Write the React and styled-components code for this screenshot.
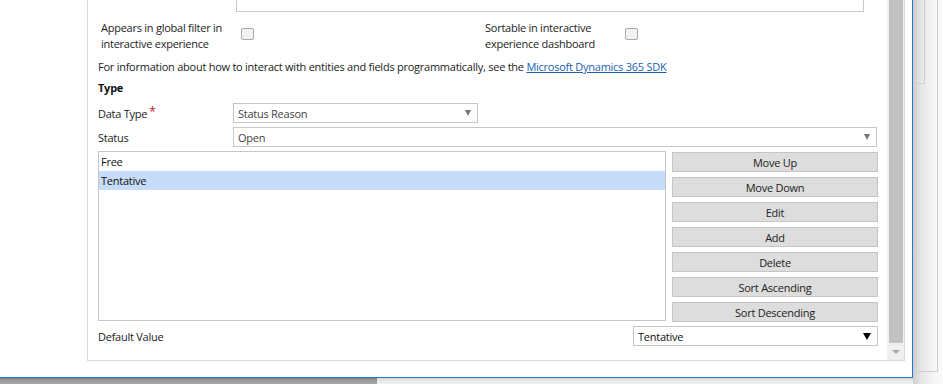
import React from "react";
import styled, { createGlobalStyle } from "styled-components";

const GlobalStyle = createGlobalStyle`
  html, body {
    margin: 0;
    padding: 0;
    background: #fff;
  }
  body {
    font-family: "Open Sans", "Noto Sans", Arial, sans-serif;
    font-size: 11px;
    letter-spacing: -0.25px;
    color: #222;
  }
  * {
    box-sizing: border-box;
  }
`;

const Desktop = styled.div`
  width: 943px;
  height: 384px;
  overflow: hidden;
  display: grid;
  grid-template-columns: 913px 30px;
  grid-template-rows: 378px 6px;
  background: #fff;
`;

const Dialog = styled.div`
  grid-column: 1;
  grid-row: 1;
  background: #fff;
  border-right: 1px solid #1b7ad2;
  border-bottom: 1px solid #1b7ad2;
  padding-left: 87px;
`;

const BackWindows = styled.div`
  grid-column: 2;
  grid-row: 1 / span 2;
  background: linear-gradient(to right, #cdcdcd 0px, #e6e6e6 8px, #f4f4f4 20px, #fbfbfb 30px);
`;

const BackFrame = styled.div`
  width: ${(p) => p.$w}px;
  height: ${(p) => p.$h}px;
  border-right: 1px solid #cfcfcf;
  border-bottom: 1px solid #cfcfcf;
`;

const BottomStrip = styled.div`
  grid-column: 1;
  grid-row: 2;
  display: flex;
`;

const Shade = styled.div`
  width: ${(p) => p.$w || "auto"};
  flex: ${(p) => (p.$w ? "none" : 1)};
  background: ${(p) =>
    p.$dark
      ? "linear-gradient(#7d7d7d, #9c9c9c 40%, #a4a4a4)"
      : "linear-gradient(#d6d6d6, #ececec 50%, #f2f2f2)"};
`;

const Panel = styled.div`
  width: 818px;
  height: 361px;
  display: flex;
  border: 1px solid #dadada;
  border-top: none;
`;

const Content = styled.div`
  flex: 1;
  padding: 0 9px 0 10px;
  display: flex;
  flex-direction: column;
`;

const ScrollBar = styled.div`
  width: 17px;
  background: #f0f0f0;
  display: flex;
  flex-direction: column;
`;

const Thumb = styled.div`
  flex: 1;
  margin: 0 1px 0 2px;
  background: #c2c2c2;
`;

const ScrollArrow = styled.div`
  height: 17px;
  display: flex;
  align-items: center;
  justify-content: center;

  &::after {
    content: "";
    border-left: 4px solid transparent;
    border-right: 4px solid transparent;
    border-top: 4px solid #a6a6a6;
  }
`;

const TopBox = styled.div`
  margin-left: 138px;
  width: 628px;
  height: 12px;
  border: 1px solid #c9c9c9;
  border-top: none;
`;

const FlagsRow = styled.div`
  margin-top: 8px;
  padding-left: 3px;
  display: grid;
  grid-template-columns: 384px 1fr;
`;

const Flag = styled.div`
  display: flex;
  align-items: flex-start;
`;

const FlagLabel = styled.div`
  width: 140px;
  line-height: 16px;
`;

const CheckBox = styled.span`
  width: 13px;
  height: 12px;
  margin-top: 8px;
  border: 1px solid #a9a9a9;
  border-radius: 2px;
  background: #f2f2f2;
`;

const Info = styled.div`
  margin-top: 6px;
  line-height: 18px;
`;

const SdkLink = styled.a`
  color: #1a5fb4;
  text-decoration: underline;
`;

const SectionTitle = styled.div`
  margin-top: 3px;
  line-height: 18px;
  font-weight: 700;
  color: #111;
`;

const FieldRow = styled.div`
  display: flex;
  align-items: center;
  justify-content: ${(p) => (p.$spread ? "space-between" : "flex-start")};
  margin-top: ${(p) => p.$top}px;
`;

const FieldLabel = styled.div`
  width: ${(p) => (p.$auto ? "auto" : "135px")};
  color: #222;
`;

const Required = styled.span`
  color: #c4161c;
  margin-left: 2px;
  font-size: 12px;
  position: relative;
  top: -2px;
`;

const Select = styled.div`
  width: ${(p) => p.$w}px;
  height: 20px;
  border: 1px solid #c6c6c6;
  padding: 0 6px 0 4px;
  display: flex;
  align-items: center;
  justify-content: space-between;
  color: ${(p) => (p.$dark ? "#111" : "#444")};
  background: #fff;

  &::after {
    content: "";
    border-left: ${(p) => (p.$dark ? 4 : 3.5)}px solid transparent;
    border-right: ${(p) => (p.$dark ? 4 : 3.5)}px solid transparent;
    border-top: ${(p) => (p.$dark ? 7 : 6)}px solid ${(p) => (p.$dark ? "#000" : "#777")};
  }
`;

const OptionsArea = styled.div`
  margin-top: 4px;
  display: flex;
  align-items: flex-start;
  gap: 6px;
`;

const ListBox = styled.div`
  width: 568px;
  height: 170px;
  border: 1px solid #c6c6c6;
`;

const ListItem = styled.div`
  height: 19px;
  line-height: 19px;
  padding-left: 2px;
  color: #111;
  background: ${(p) => (p.$selected ? "#c6dcf8" : "transparent")};
`;

const ButtonColumn = styled.div`
  flex: 1;
  padding-top: 1px;
  display: flex;
  flex-direction: column;
  gap: 5px;
`;

const ActionButton = styled.button`
  height: 20px;
  padding: 0;
  border: 1px solid #c5c5c5;
  background: #dddddd;
  color: #222;
  font-family: inherit;
  font-size: 11px;
  letter-spacing: inherit;
  text-align: center;
`;

const actions = [
  "Move Up",
  "Move Down",
  "Edit",
  "Add",
  "Delete",
  "Sort Ascending",
  "Sort Descending",
];

const App = () => {
  return (
    <>
      <GlobalStyle />
      <Desktop>
        <Dialog>
          <Panel>
            <Content>
              <TopBox />

              <FlagsRow>
                <Flag>
                  <FlagLabel>
                    Appears in global filter in
                    <br />
                    interactive experience
                  </FlagLabel>
                  <CheckBox />
                </Flag>
                <Flag>
                  <FlagLabel>
                    Sortable in interactive
                    <br />
                    experience dashboard
                  </FlagLabel>
                  <CheckBox />
                </Flag>
              </FlagsRow>

              <Info>
                For information about how to interact with entities and fields
                programmatically, see the{" "}
                <SdkLink href="#">Microsoft Dynamics 365 SDK</SdkLink>
              </Info>

              <SectionTitle>Type</SectionTitle>

              <FieldRow $top={6}>
                <FieldLabel>
                  Data Type<Required>*</Required>
                </FieldLabel>
                <Select $w={245}>Status Reason</Select>
              </FieldRow>

              <FieldRow $top={4}>
                <FieldLabel>Status</FieldLabel>
                <Select $w={644}>Open</Select>
              </FieldRow>

              <OptionsArea>
                <ListBox>
                  <ListItem>Free</ListItem>
                  <ListItem $selected>Tentative</ListItem>
                </ListBox>
                <ButtonColumn>
                  {actions.map((label) => (
                    <ActionButton key={label}>{label}</ActionButton>
                  ))}
                </ButtonColumn>
              </OptionsArea>

              <FieldRow $top={4} $spread>
                <FieldLabel $auto>Default Value</FieldLabel>
                <Select $w={245} $dark>
                  Tentative
                </Select>
              </FieldRow>
            </Content>
            <ScrollBar>
              <Thumb />
              <ScrollArrow />
            </ScrollBar>
          </Panel>
        </Dialog>

        <BackWindows>
          <BackFrame $w={25} $h={372}>
            <BackFrame $w={12} $h={84} />
          </BackFrame>
        </BackWindows>

        <BottomStrip>
          <Shade $w="377px" $dark />
          <Shade />
        </BottomStrip>
      </Desktop>
    </>
  );
};

export default App;
